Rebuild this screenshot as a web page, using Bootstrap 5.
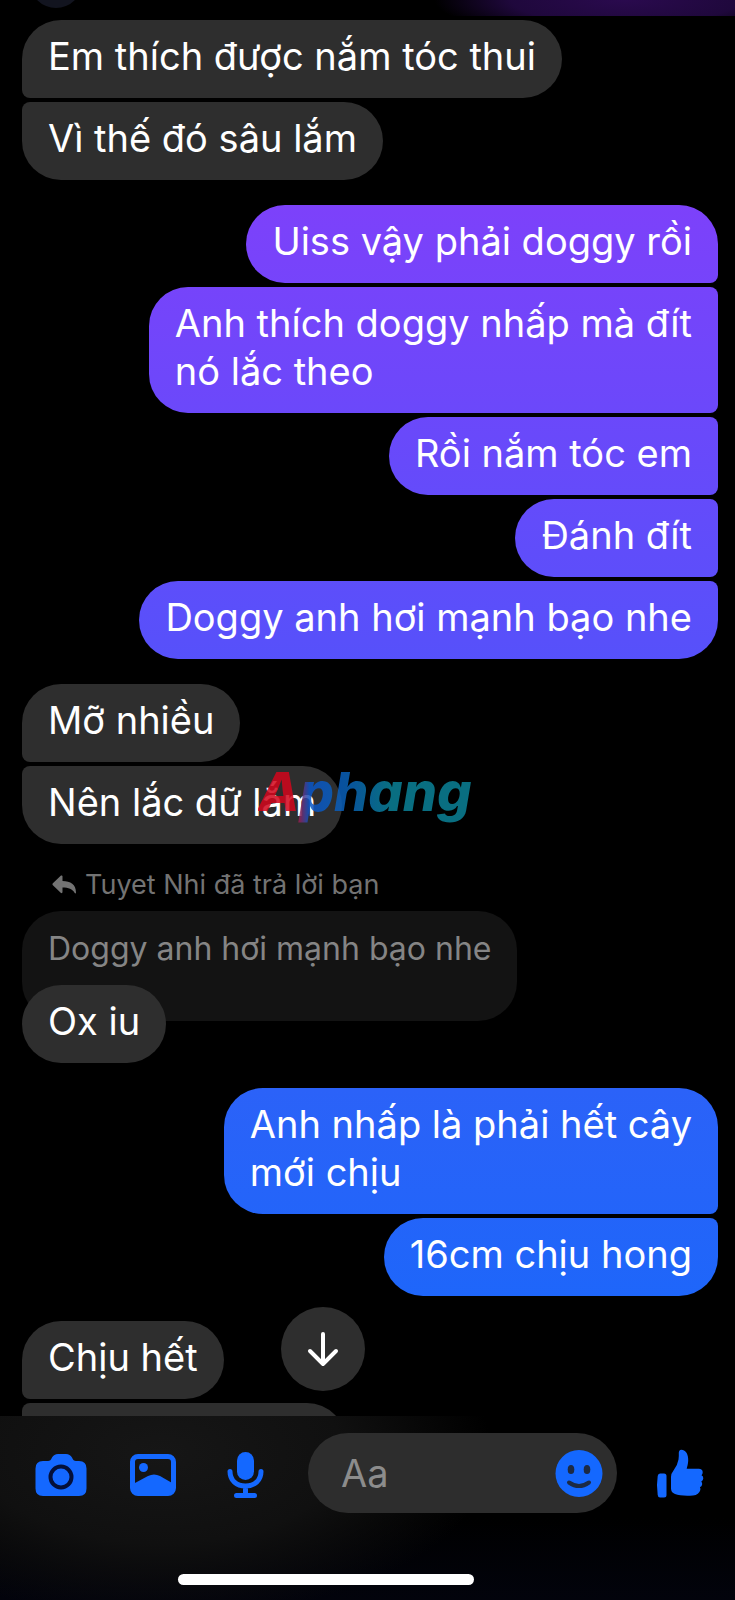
<!DOCTYPE html>
<html lang="vi">
<head>
<meta charset="utf-8">
<meta name="viewport" content="width=device-width, initial-scale=1">
<title>Messenger</title>
<link href="https://cdn.jsdelivr.net/npm/bootstrap@5.3.0/dist/css/bootstrap.min.css" rel="stylesheet">
<style>
  body { background: #000; color: #fff; font-family: Inter, "Noto Sans", sans-serif; }
  .top-strip { height: 16px; background: radial-gradient(ellipse 190px 40px at 85% 0, #2a0a4e, #1f083c 60%, transparent); }
  .peer-dot { width: 52px; height: 52px; bottom: 8px; left: 30px; background: #12141f; }
  .chat { min-height: 0; padding: 4px 17px 0 22px; }
  .run + .run { margin-top: 25px; }
  .bubble { font-size: 38px; line-height: 48px; padding: 12px 26px 18px; border-radius: 39px; max-width: 590px; }
  .theirs { background: #2e2e2e; }
  .mine { background: linear-gradient(#8a3cf8 0, #7d41fa 200px, #5850fa 640px, #2b62f8 1090px, #1e66fa 1300px) fixed; }
  .theirs.joins-down { border-bottom-left-radius: 8px; }
  .theirs.joins-up { border-top-left-radius: 8px; }
  .mine.joins-down { border-bottom-right-radius: 8px; }
  .mine.joins-up { border-top-right-radius: 8px; }
  .wm { left: 236px; top: -6px; font-size: 54px; line-height: 64px; font-weight: 800; font-style: italic; opacity: .85;
    color: transparent; background: linear-gradient(90deg, #d3061c 0 17%, #0a55c8 24%, #0a62b8 42%, #0b8298 62%, #0b8298); background-clip: text; -webkit-background-clip: text; }
  .reply-note { color: #737373; font-size: 27px; line-height: 32px; padding-left: 30px; margin-bottom: 10px; }
  .quoted { background: #131313; color: #858585; font-size: 32px; line-height: 40px; padding: 18px 26px 52px; border-radius: 39px; }
  .over-quote { margin-top: -36px; }
  .peek { width: 324px; height: 78px; }
  .composer { background: radial-gradient(ellipse 45% 90% at 22% 20%, #161616, #101010 55%, transparent), linear-gradient(#000 55%, #02030c); padding: 17px 27px 15px 35px; }
  .tools { gap: 39px; }
  .tool { border: 0; background: none; padding: 0; color: #1468ff; line-height: 0; }
  .field { background: #2d2d2d; height: 80px; border-radius: 40px; padding: 0 14px 0 33px; }
  .field input { color: #fff; font-size: 38px; min-width: 0; }
  .field input::placeholder { color: #8c8c8c; opacity: 1; }
  .jump { width: 84px; height: 84px; left: 44%; bottom: calc(100% + 25px); background: #2e2e2e; color: #fff; border: 0; }
  .home-bar { width: 44%; margin: 61px 0 0 143px; height: 11px; background: #fff; }
</style>
</head>
<body class="vh-100 d-flex flex-column overflow-hidden">
<header class="top-strip position-relative overflow-hidden flex-shrink-0"><span class="peer-dot position-absolute rounded-circle"></span></header>

<main class="chat flex-fill overflow-hidden">
  <section class="run d-flex flex-column align-items-start gap-1">
    <div class="bubble theirs joins-down">Em thích được nắm tóc thui</div>
    <div class="bubble theirs joins-up">Vì thế đó sâu lắm</div>
  </section>
  <section class="run d-flex flex-column align-items-end gap-1">
    <div class="bubble mine joins-down">Uiss vậy phải doggy rồi</div>
    <div class="bubble mine joins-up joins-down">Anh thích doggy nhấp mà đít<br>nó lắc theo</div>
    <div class="bubble mine joins-up joins-down">Rồi nắm tóc em</div>
    <div class="bubble mine joins-up joins-down">Đánh đít</div>
    <div class="bubble mine joins-up">Doggy anh hơi mạnh bạo nhe</div>
  </section>
  <section class="run d-flex flex-column align-items-start gap-1">
    <div class="bubble theirs joins-down">Mỡ nhiều</div>
    <div class="position-relative">
      <div class="bubble theirs joins-up">Nên lắc dữ lắm</div>
      <span class="wm position-absolute">Aphang</span>
    </div>
  </section>
  <section class="run d-flex flex-column align-items-start">
    <div class="reply-note d-flex align-items-center gap-2">
      <svg width="25" height="20" viewBox="0 0 25 20" fill="currentColor" aria-hidden="true"><path d="M10.500 1.500v4.500c8 0 13.500 3.500 13.500 11.500 0 1-.8 1.200-1.300.4C20.500 14 16.500 12.500 10.500 12.500v4.500c0 1-1 1.500-1.800.8L.9 10.200c-.6-.6-.6-1.300 0-1.900L8.700.8c.8-.7 1.800-.3 1.800.7z"/></svg>
      <span>Tuyet Nhi đã trả lời bạn</span>
    </div>
    <div class="quoted">Doggy anh hơi mạnh bạo nhe</div>
    <div class="bubble theirs over-quote">Ox iu</div>
  </section>
  <section class="run d-flex flex-column align-items-end gap-1">
    <div class="bubble mine joins-down">Anh nhấp là phải hết cây<br>mới chịu</div>
    <div class="bubble mine joins-up">16cm chịu hong</div>
  </section>
  <section class="run d-flex flex-column align-items-start gap-1">
    <div class="bubble theirs joins-down">Chịu hết</div>
    <div class="bubble theirs joins-up peek"></div>
  </section>
</main>

<footer class="composer position-relative flex-shrink-0">
  <button type="button" class="jump position-absolute translate-middle-x rounded-circle d-flex align-items-center justify-content-center" aria-label="Xuống cuối">
    <svg width="32" height="36" viewBox="0 0 32 36" fill="none" stroke="currentColor" stroke-width="4" stroke-linecap="round" stroke-linejoin="round"><path d="M16 3v30M3 20l13 13 13-13"/></svg>
  </button>
  <form class="tools d-flex align-items-center">
    <button type="button" class="tool" aria-label="Máy ảnh">
      <svg width="52" height="52" viewBox="0 -2 52 52"><path fill="currentColor" d="M17 8.500Q19 5 23 5h8q4 0 6 3.500 1.300 3.500 4 3.500h3q7.500 0 7.500 7.500v20q0 7.500-7.500 7.500H8Q.5 47 .5 39.500v-20Q.5 12 8 12h5q2.700 0 4-3.500z"/><circle cx="26" cy="28" r="10.500" fill="#1468ff" stroke="#04103a" stroke-width="4"/></svg>
    </button>
    <button type="button" class="tool" aria-label="Ảnh">
      <svg width="52" height="52" viewBox="-1 -2 52 52"><rect x="5.500" y="7.500" width="41" height="37" rx="5.500" fill="none" stroke="currentColor" stroke-width="5"/><circle cx="16.500" cy="18.500" r="4.500" fill="currentColor"/><path fill="currentColor" d="M7 34.500l14-7.500q6-3 12 0l13 7.500V43q0 2-3 2H10q-3 0-3-2z"/></svg>
    </button>
    <button type="button" class="tool" aria-label="Ghi âm">
      <svg width="52" height="52" viewBox="-1 -2 52 52"><rect x="19" y="3" width="17" height="28" rx="8.500" fill="currentColor"/><path fill="none" stroke="currentColor" stroke-width="5" stroke-linecap="round" d="M12 22.500c0 9 6.500 14.500 15.500 14.500S43 31.500 43 22.500M27.500 38v6M18.500 46.500h18"/></svg>
    </button>
    <div class="field d-flex align-items-center flex-fill">
      <input type="text" class="flex-fill w-100 bg-transparent border-0 p-0" placeholder="Aa" aria-label="Tin nhắn">
      <button type="button" class="tool" aria-label="Biểu tượng cảm xúc">
        <svg width="48" height="48" viewBox="0 -1 48 48"><circle cx="24" cy="23.500" r="23.500" fill="currentColor"/><g fill="#1c2a44"><ellipse cx="16" cy="19.500" rx="3.300" ry="4.600"/><ellipse cx="32" cy="19.500" rx="3.300" ry="4.600"/></g><path d="M14 32.500q10 7 20 0" fill="none" stroke="#1c2a44" stroke-width="4" stroke-linecap="round"/></svg>
      </button>
    </div>
    <button type="button" class="tool" aria-label="Thích">
      <svg width="52" height="52" viewBox="0 0 52 52" fill="currentColor"><path d="M4 26.500h4q2.500 0 2.500 2.500v19q0 2.500-2.500 2.500H4q-2 0-2.300-2.500-1.500-10 0-19Q2 26.500 4 26.500z"/><path d="M15 30q0-3.500 2.500-6.500 4-5 5-11 .5-3 .3-6.500c0-2 .8-3.300 2.400-3.300 5 0 7.300 5 7 11-.1 3-1 6-1.500 8h12q4 0 4 3.500 0 2-1.200 3 2 1 1.800 3.300-.2 2-2 3 1.200 1.200.8 3.200-.4 1.800-2.200 2.600.8 1.200.4 2.800Q43 48 37 48.500q-12 .8-18-1.500-4-1.500-4-5.500z"/></svg>
    </button>
  </form>
  <div class="home-bar rounded-pill"></div>
</footer>
<script src="https://cdn.jsdelivr.net/npm/bootstrap@5.3.0/dist/js/bootstrap.bundle.min.js"></script>
</body>
</html>
